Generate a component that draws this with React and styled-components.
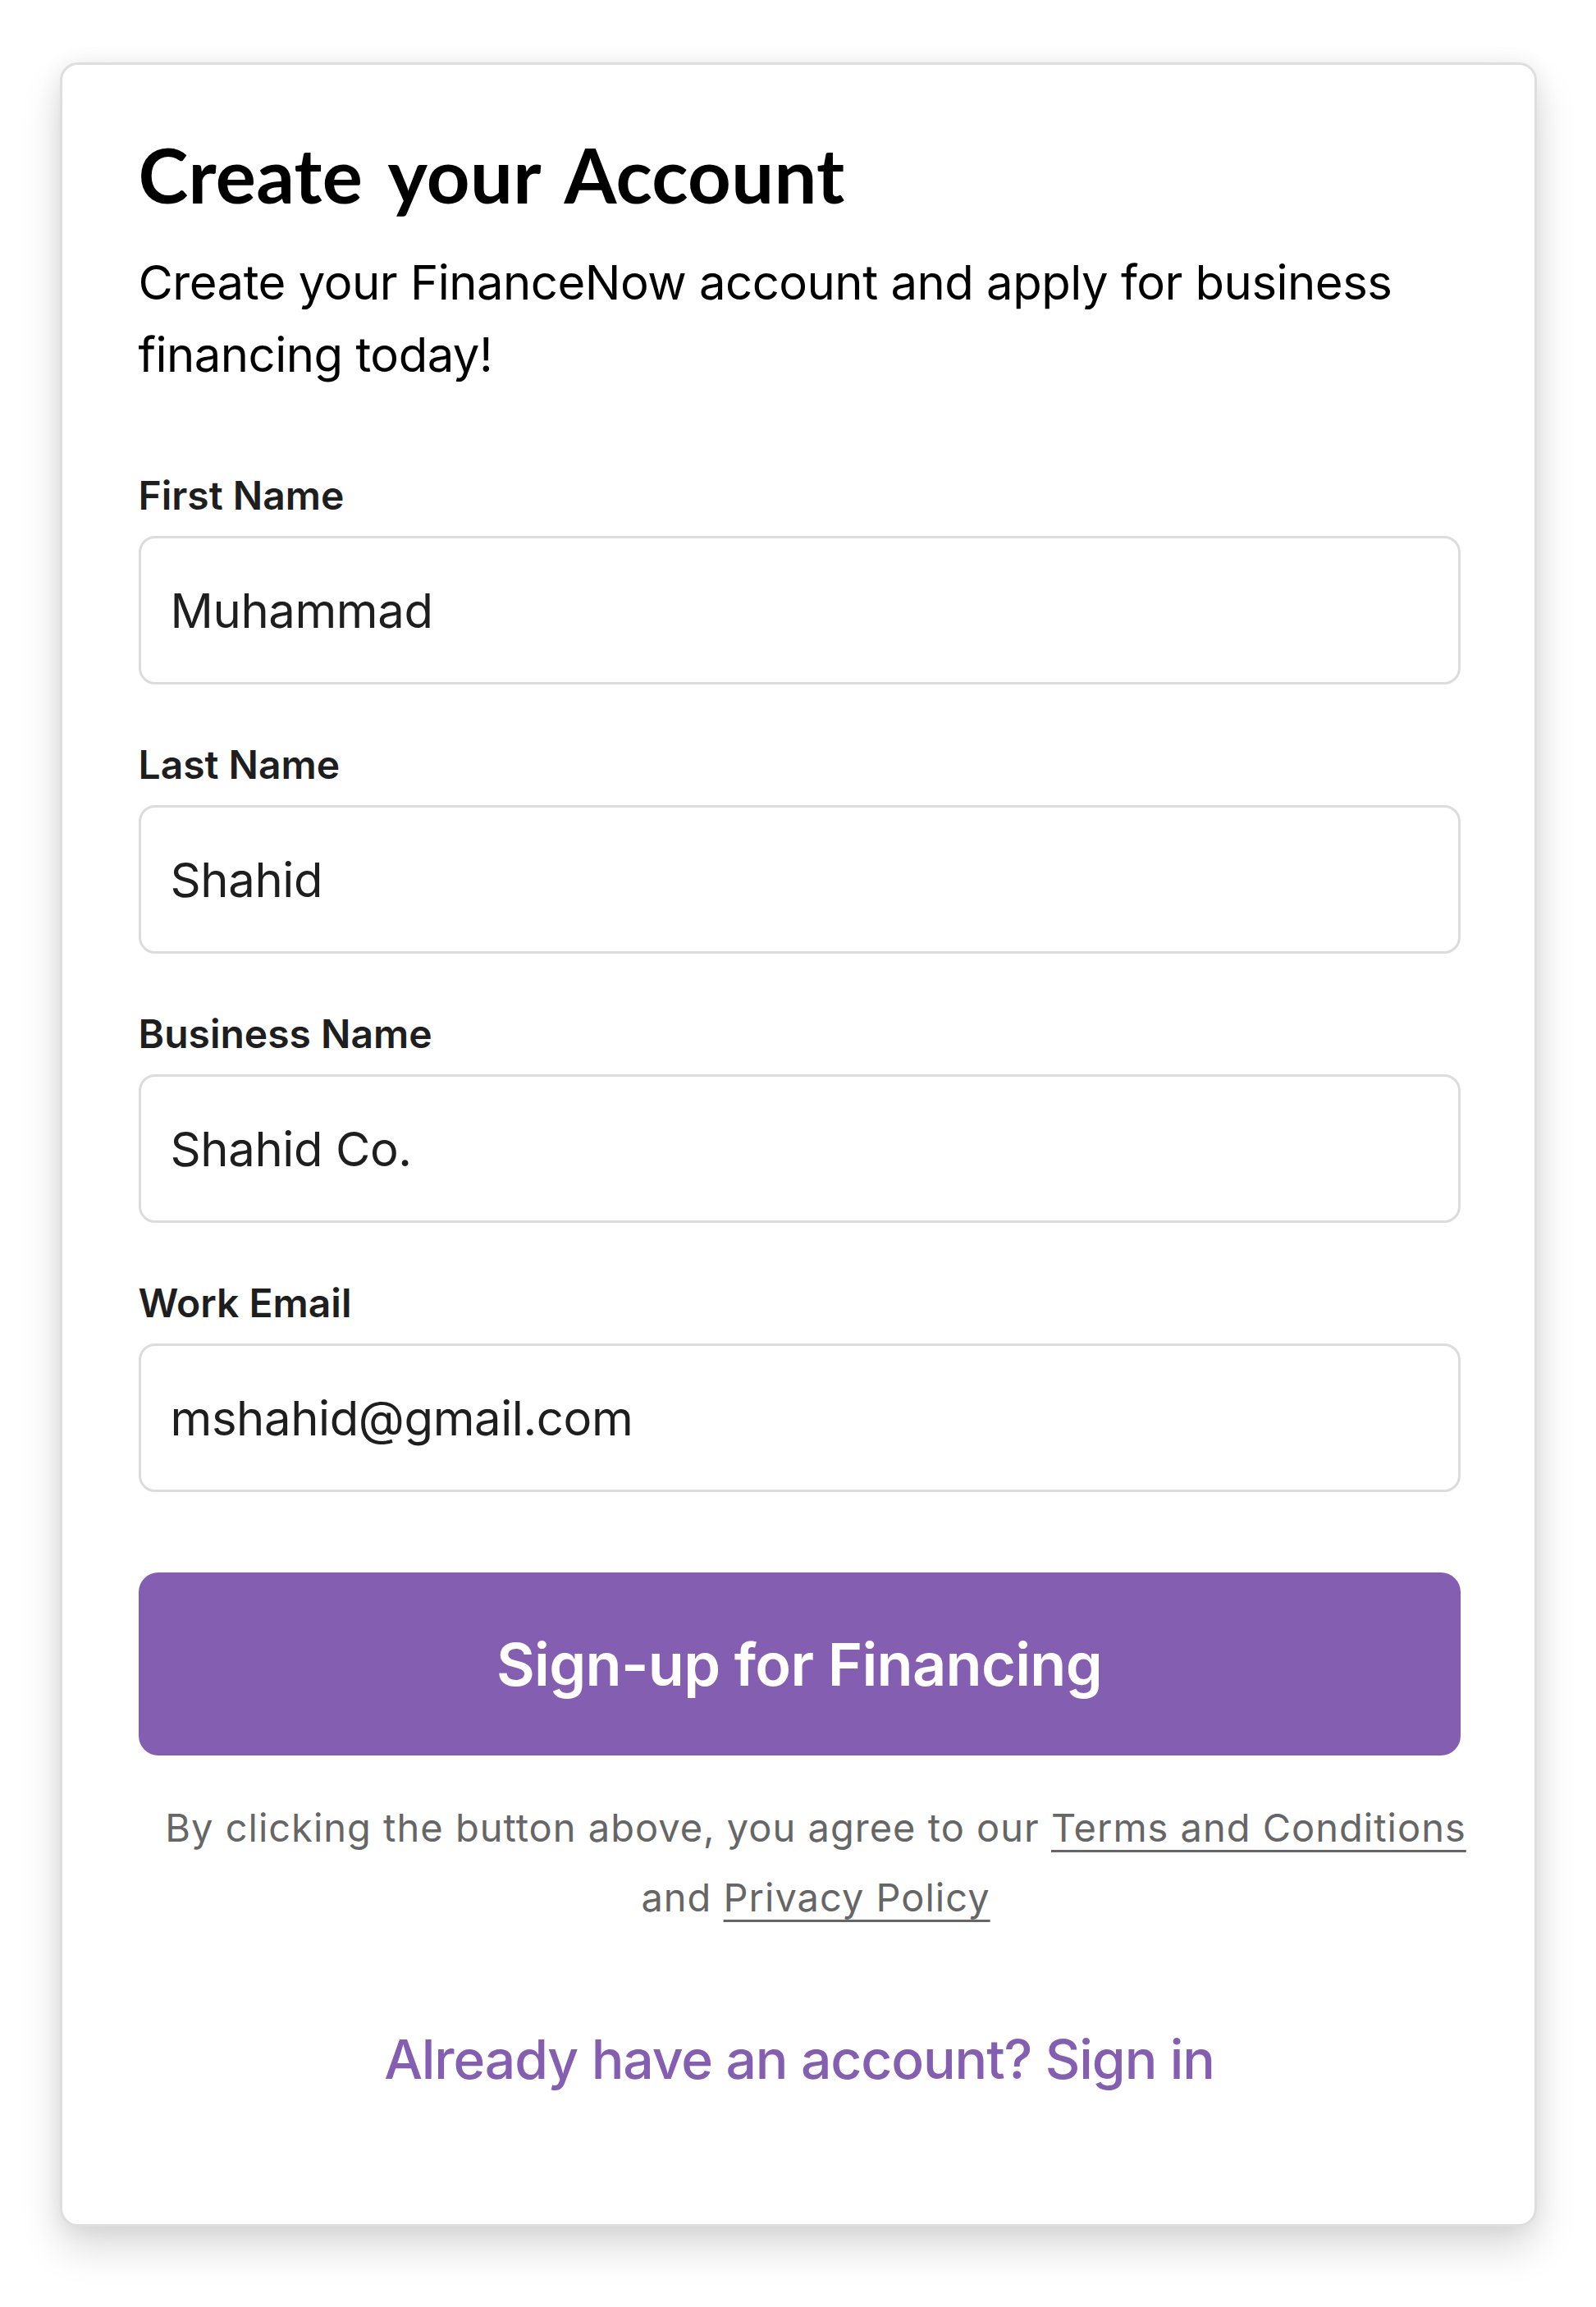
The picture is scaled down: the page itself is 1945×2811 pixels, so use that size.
import styled, { createGlobalStyle } from "styled-components";

const GlobalStyle = createGlobalStyle`
  * {
    box-sizing: border-box;
  }
  body {
    margin: 0;
    background: #ffffff;
    font-family: "Inter", "Liberation Sans", sans-serif;
  }
`;

const Page = styled.div`
  display: flex;
  justify-content: center;
  padding: 76px 0 98px;
`;

const Card = styled.div`
  width: 1800px;
  background: #ffffff;
  border: 3px solid #dedede;
  border-radius: 22px;
  padding: 79px 90px 161px 93px;
  box-shadow: 0 26px 50px rgba(0, 0, 0, 0.14), 0 2px 28px rgba(0, 0, 0, 0.07);
  display: flex;
  flex-direction: column;
`;

const Title = styled.h1`
  margin: 0;
  font-family: "Lato", "Liberation Sans", sans-serif;
  font-weight: 700;
  font-size: 92px;
  line-height: 110px;
  letter-spacing: 0.3px;
  word-spacing: 10px;
  color: #000000;
`;

const Subtitle = styled.p`
  margin: 32px 0 0;
  font-size: 58px;
  line-height: 88px;
  letter-spacing: -0.5px;
  color: #000000;
`;

const Form = styled.form`
  margin-top: 99px;
  display: flex;
  flex-direction: column;
  gap: 69px;
`;

const Field = styled.label`
  display: flex;
  flex-direction: column;
  gap: 20px;
`;

const Label = styled.span`
  font-size: 48px;
  line-height: 58px;
  font-weight: 600;
  color: #1e1e1e;
`;

const Input = styled.input`
  height: 181px;
  width: 100%;
  border: 3px solid #dcdcdc;
  border-radius: 20px;
  padding: 0 36px;
  font-family: "Inter", "Liberation Sans", sans-serif;
  font-size: 58px;
  letter-spacing: -0.4px;
  color: #1e1e1e;
  background: #ffffff;
  outline: none;
`;

const SubmitButton = styled.button`
  margin-top: 29px;
  height: 223px;
  width: 100%;
  border: none;
  border-radius: 24px;
  background: #845eb0;
  color: #ffffff;
  font-family: "Inter", "Liberation Sans", sans-serif;
  font-size: 72px;
  font-weight: 600;
  letter-spacing: -0.7px;
  cursor: pointer;
`;

const Terms = styled.p`
  margin: 45px -30px 0 10px;
  font-size: 47px;
  line-height: 85px;
  letter-spacing: 1px;
  text-align: center;
  color: #666666;
`;

const TermsLink = styled.a`
  color: #666666;
  text-decoration: underline;
  text-decoration-thickness: 3px;
  text-underline-offset: 10px;
`;

const SignIn = styled.a`
  margin-top: 115px;
  align-self: center;
  font-size: 66px;
  line-height: 80px;
  font-weight: 500;
  letter-spacing: -1.1px;
  color: #845eb0;
  text-decoration: none;
`;

const fields = [
  { label: "First Name", value: "Muhammad" },
  { label: "Last Name", value: "Shahid" },
  { label: "Business Name", value: "Shahid Co." },
  { label: "Work Email", value: "mshahid@gmail.com" },
];

const App = () => {
  return (
    <>
      <GlobalStyle />
      <Page>
        <Card>
          <Title>Create your Account</Title>
          <Subtitle>
            Create your FinanceNow account and apply for business financing
            today!
          </Subtitle>
          <Form onSubmit={(e) => e.preventDefault()}>
            {fields.map((f) => (
              <Field key={f.label}>
                <Label>{f.label}</Label>
                <Input defaultValue={f.value} />
              </Field>
            ))}
            <SubmitButton type="submit">Sign-up for Financing</SubmitButton>
          </Form>
          <Terms>
            By clicking the button above, you agree to our{" "}
            <TermsLink href="#">Terms and Conditions</TermsLink> and{" "}
            <TermsLink href="#">Privacy Policy</TermsLink>
          </Terms>
          <SignIn href="#">Already have an account? Sign in</SignIn>
        </Card>
      </Page>
    </>
  );
};

export default App;
